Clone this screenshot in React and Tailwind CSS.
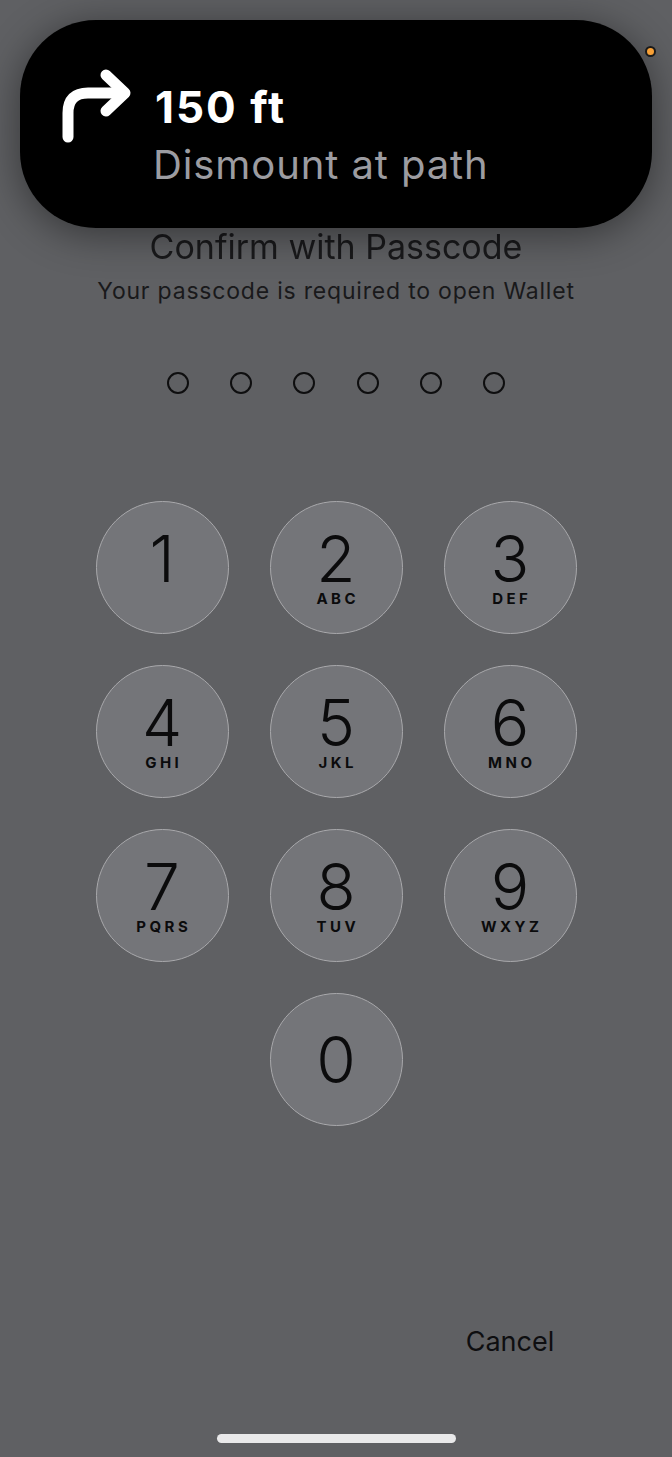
import React from "react";

const keys = [
  { d: "1", l: "" },
  { d: "2", l: "ABC" },
  { d: "3", l: "DEF" },
  { d: "4", l: "GHI" },
  { d: "5", l: "JKL" },
  { d: "6", l: "MNO" },
  { d: "7", l: "PQRS" },
  { d: "8", l: "TUV" },
  { d: "9", l: "WXYZ" },
];

function Key({ d, l, zero }) {
  return (
    <div className="w-[133px] h-[133px] rounded-full bg-[#747579] border-[1.5px] border-[#a8a8ab] flex flex-col items-center justify-center text-[#0b0b0c]">
      <div className={"text-[64px] leading-[64px] font-light " + (zero ? "" : "mt-[-2px]")}>{d}</div>
      {!zero && (
        <div className="text-[15px] leading-[16px] font-bold tracking-[3.5px] pl-[3.5px] h-[16px]">
          {l}
        </div>
      )}
    </div>
  );
}

export default function App() {
  return (
    <div
      className="relative w-[672px] h-[1457px] overflow-hidden bg-[#5f6063] flex flex-col items-center"
      style={{ fontFamily: "Inter, 'Liberation Sans', sans-serif" }}
    >
      <div className="pt-[227px] text-[34px] leading-[40px] text-[#19191b] blur-[0.6px]">
        Confirm with Passcode
      </div>
      <div className="mt-[10px] text-[23px] leading-[28px] tracking-[0.8px] text-[#19191b]">
        Your passcode is required to open Wallet
      </div>

      <div className="mt-[67px] flex gap-[41.4px]">
        {[0, 1, 2, 3, 4, 5].map((i) => (
          <div key={i} className="w-[22px] h-[22px] rounded-full border-2 border-[#0e0e0f]" />
        ))}
      </div>

      <div className="mt-[107px] grid grid-cols-[133px_133px_133px] gap-x-[41px] gap-y-[31px]">
        {keys.map((k) => (
          <Key key={k.d} d={k.d} l={k.l} />
        ))}
        <div />
        <Key d="0" zero />
        <div />
      </div>

      <div className="mt-[200px] grid grid-cols-[133px_133px_133px] gap-x-[41px]">
        <div />
        <div />
        <div className="text-center text-[27px] leading-[32px] text-[#0e0e10]">Cancel</div>
      </div>

      <div className="mt-[76px] w-[239px] h-[9px] rounded-full bg-[#e9e9ea]" />

      {/* Navigation banner overlay */}
      <div className="absolute left-[20px] top-[20px] w-[632px] h-[208px] rounded-[76px] bg-black shadow-[0_6px_40px_rgba(0,0,0,0.45)] flex items-start pl-[35px] pt-[45px]">
        <svg width="80" height="80" viewBox="0 0 80 80" fill="none">
          <path
            d="M13 72 V48 Q13 28 33 28 H68"
            stroke="white"
            strokeWidth="11"
            strokeLinecap="round"
            strokeLinejoin="round"
          />
          <path
            d="M51 10 L70 28 L51 46"
            stroke="white"
            strokeWidth="11"
            strokeLinecap="round"
            strokeLinejoin="round"
          />
        </svg>
        <div className="ml-[20px] mt-[18px] flex flex-col">
          <div className="text-[44px] leading-[48px] font-bold tracking-[2px] text-white">150 ft</div>
          <div className="mt-[11px] text-[40px] leading-[46px] tracking-[0.9px] text-[#9c9ca1] ml-[-2px]">
            Dismount at path
          </div>
        </div>
      </div>

      <div className="absolute left-[645px] top-[46px] w-[11px] h-[11px] rounded-full bg-[#f7a036] border-2 border-[#1a1a1a]" />
    </div>
  );
}
